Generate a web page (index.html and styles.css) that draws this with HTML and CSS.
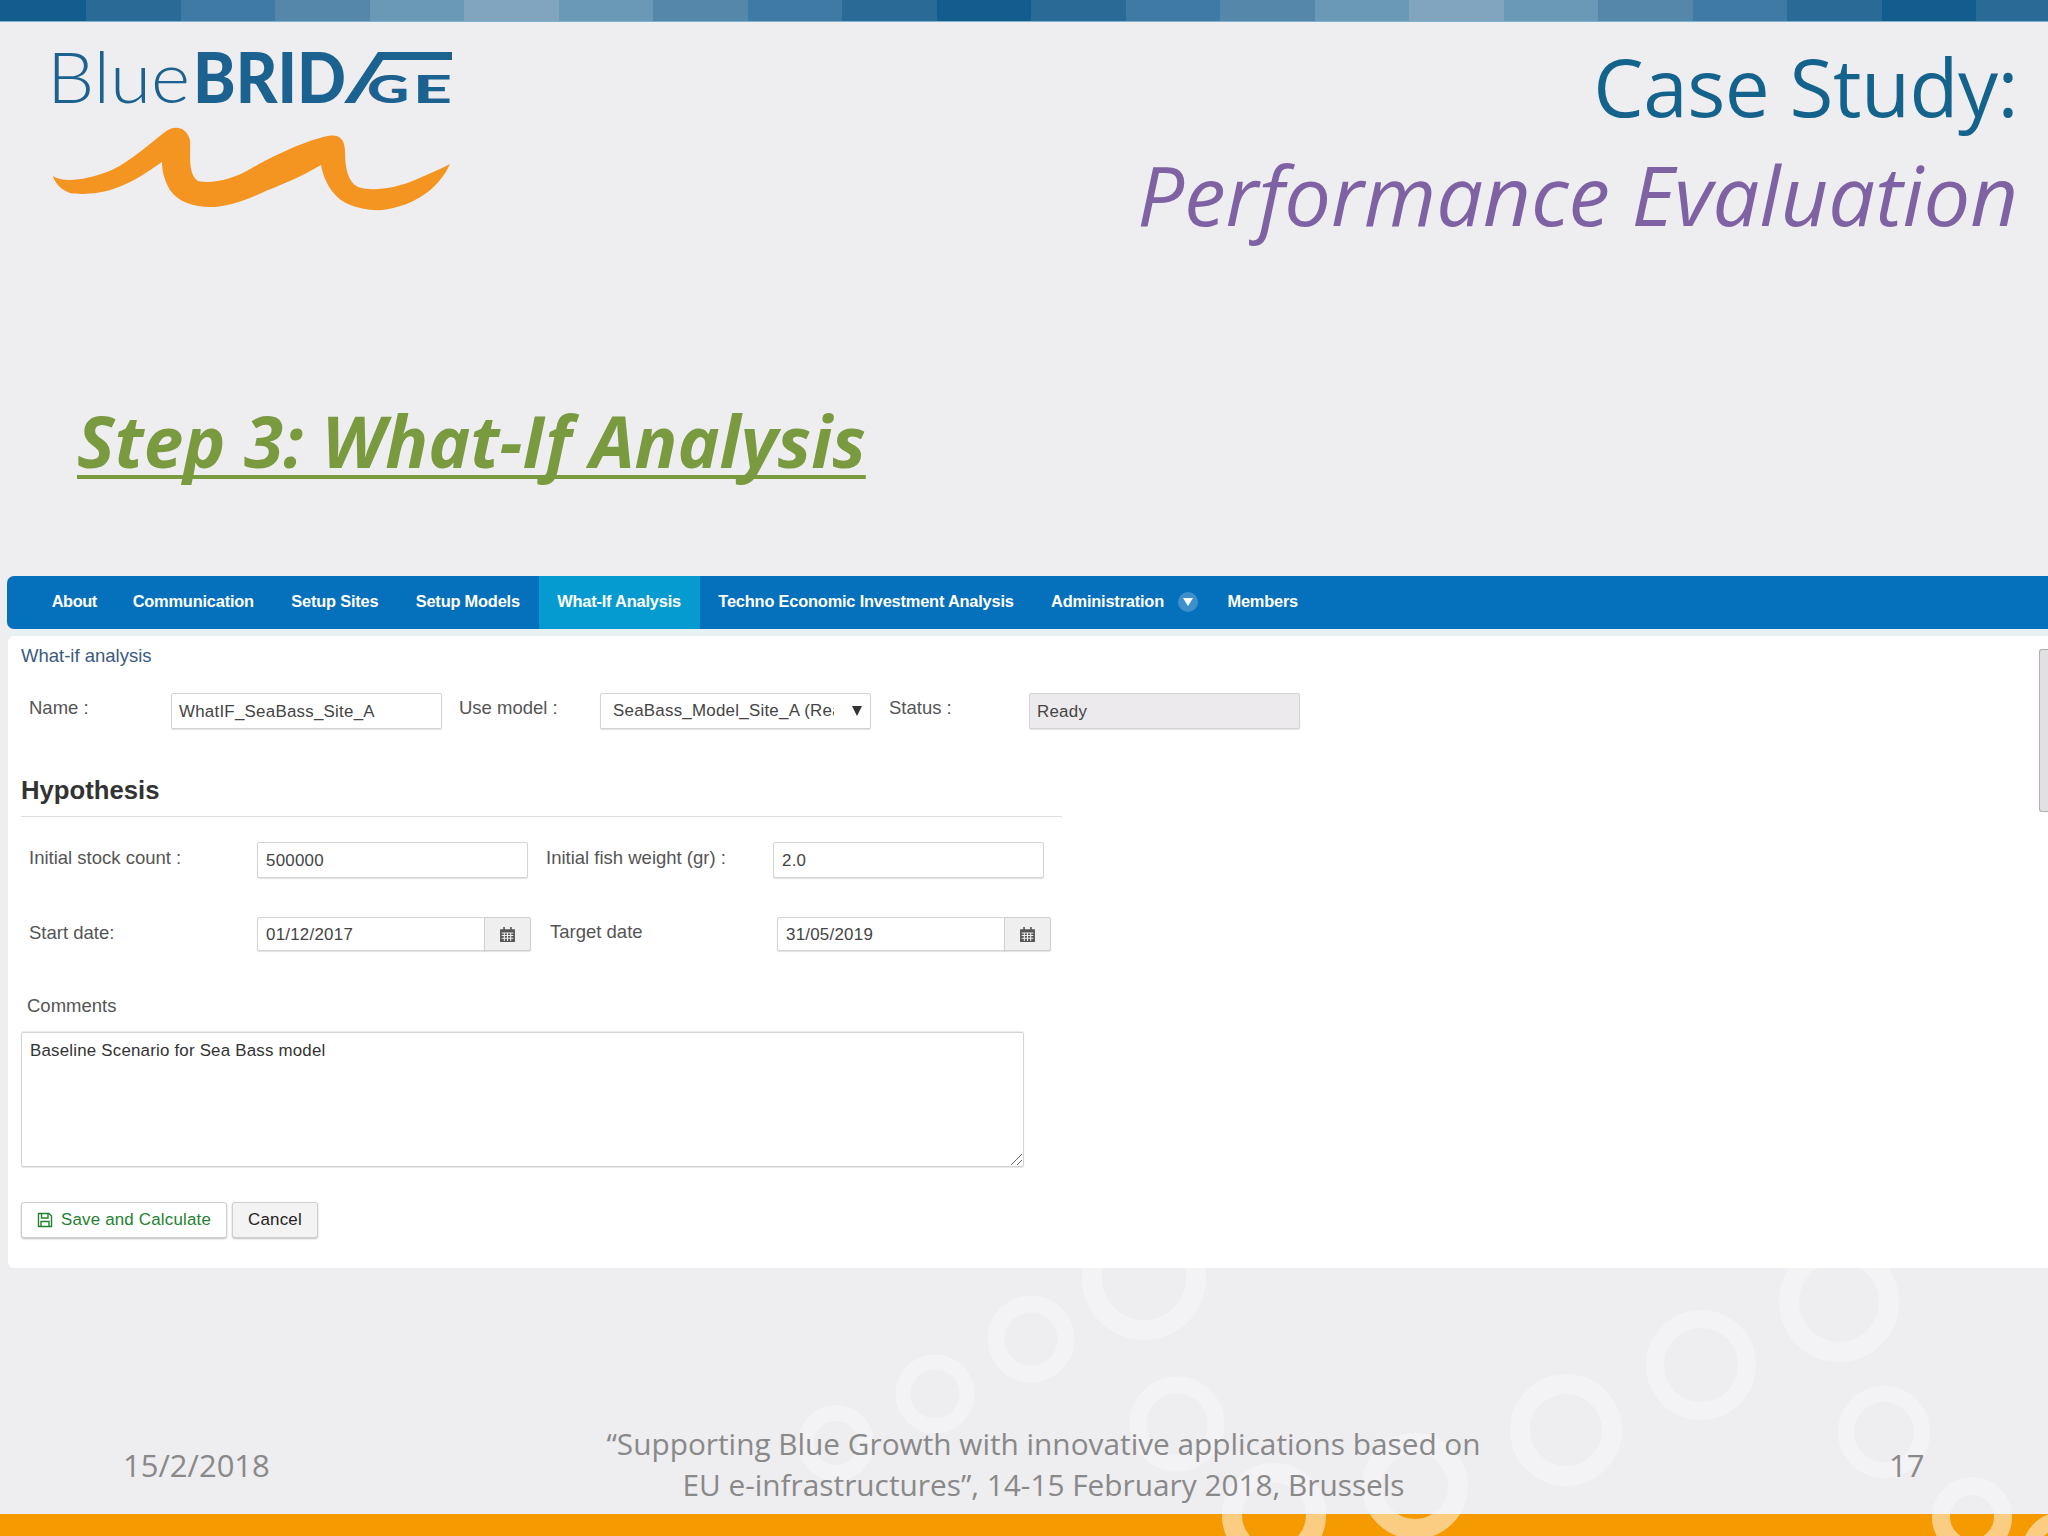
FILE: index.html
```
<!DOCTYPE html>
<html lang="en">
<head>
<meta charset="utf-8">
<title>Case Study: Performance Evaluation</title>
<link rel="stylesheet" href="styles.css">
</head>
<body>
<main class="slide">
  <svg class="rings" viewBox="0 0 2048 1536" aria-hidden="true">
    <circle class="ring" cx="1144" cy="1278" r="52" stroke-width="20"/>
    <circle class="ring" cx="1031" cy="1339" r="35" stroke-width="17"/>
    <circle class="ring" cx="935" cy="1394" r="32" stroke-width="15"/>
    <circle class="ring" cx="1177" cy="1424" r="39" stroke-width="17"/>
    <circle class="ring" cx="836" cy="1443" r="30" stroke-width="16"/>
    <circle class="ring" cx="1274" cy="1515" r="42" stroke-width="20"/>
    <circle class="ring" cx="1415" cy="1486" r="43" stroke-width="20"/>
    <circle class="ring" cx="1566" cy="1430" r="46" stroke-width="20"/>
    <circle class="ring" cx="1701" cy="1365" r="46" stroke-width="18"/>
    <circle class="ring" cx="1839" cy="1302" r="50" stroke-width="20"/>
    <circle class="ring" cx="1884" cy="1432" r="38" stroke-width="16"/>
    <circle class="ring" cx="1972" cy="1517" r="31" stroke-width="18"/>
    <circle class="ring" cx="2062" cy="1552" r="32" stroke-width="16"/>
  </svg>

  <div class="stripes">
    <i class="s1 first"></i><i class="s2"></i><i class="s3"></i><i class="s4"></i><i class="s5"></i><i class="s6"></i><i class="s5"></i><i class="s4"></i><i class="s3"></i><i class="s2"></i><i class="s1"></i><i class="s2"></i><i class="s3"></i><i class="s4"></i><i class="s5"></i><i class="s6"></i><i class="s5"></i><i class="s4"></i><i class="s3"></i><i class="s2"></i><i class="s1"></i><i class="s2"></i>
  </div>

  <header class="head">
    <svg class="logo" viewBox="0 -20 400 178" role="img" aria-label="BlueBRIDGE">
      <text class="logo-thin" x="-5" y="51" textLength="143" lengthAdjust="spacingAndGlyphs">Blue</text>
      <text class="logo-bold" x="141" y="51" textLength="153" lengthAdjust="spacingAndGlyphs">BRID</text>
      <path class="logo-shape" d="M292 51 L326 0 H400 V8 H331 L303 51 Z"/>
      <text class="logo-small" x="315" y="51" textLength="42" lengthAdjust="spacingAndGlyphs">G</text>
      <text class="logo-small" x="361" y="51" textLength="39" lengthAdjust="spacingAndGlyphs">E</text>
      <path class="logo-wave" d="M1 124 C10 130 30 130 60 118 C80 108 100 90 113 80 C122 73 134 74 138 88 C139 100 135 122 146 129 C160 132 180 128 200 116 C225 102 255 88 276 84 C288 82 293 88 293 100 C293 116 296 130 306 135 C320 140 345 136 363 128 C375 123 388 117 398 112 C390 130 372 148 345 155 C330 160 312 159 296 152 C282 146 272 130 269 113 C250 124 232 132 216 138 C195 148 175 155 158 155 C142 155 126 150 118 138 C112 128 110 118 110 110 C95 120 82 130 64 136 C48 142 30 143 18 141 C10 138 3 132 1 124 Z"/>
    </svg>
    <div class="titles">
      <h1 class="title-main">Case Study:</h1>
      <p class="title-sub">Performance Evaluation</p>
    </div>
  </header>

  <h2 class="step">Step 3: What-If Analysis</h2>

  <nav class="nav">
    <a class="tab tab-first">About</a>
    <a class="tab">Communication</a>
    <a class="tab">Setup Sites</a>
    <a class="tab">Setup Models</a>
    <a class="tab active">What-If Analysis</a>
    <a class="tab">Techno Economic Investment Analysis</a>
    <a class="tab tab-menu">Administration<span class="caret"><svg viewBox="0 0 10 8" width="10" height="8" aria-hidden="true"><path d="M0 0 H10 L5 8 Z"/></svg></span></a>
    <a class="tab tab-last">Members</a>
  </nav>
  <div class="nav-gap"></div>

  <section class="panel">
    <span class="scrollbar"></span>
    <div class="crumb">What-if analysis</div>

    <div class="row row-top">
      <label class="lab lab-name">Name :</label>
      <div class="field w-270">WhatIF_SeaBass_Site_A</div>
      <label class="lab lab-model">Use model :</label>
      <div class="field w-270 select"><span class="clip">SeaBass_Model_Site_A (Real)</span><svg class="arrow" viewBox="0 0 10 10" aria-hidden="true"><path d="M0 0 H10 L5 10 Z"/></svg></div>
      <label class="lab lab-status">Status :</label>
      <div class="field w-270 readonly">Ready</div>
    </div>

    <h3 class="hyp">Hypothesis</h3>

    <div class="row row-stock">
      <label class="lab lab-stock">Initial stock count :</label>
      <div class="field w-270">500000</div>
      <label class="lab lab-weight">Initial fish weight (gr) :</label>
      <div class="field w-270">2.0</div>
    </div>

    <div class="row row-date">
      <label class="lab lab-stock">Start date:</label>
      <div class="date">
        <div class="field date-in">01/12/2017</div>
        <span class="addon"><svg class="cal" viewBox="0 0 16 16" aria-hidden="true"><path d="M1 3 H4 V1 H5.5 V3 H10.5 V1 H12 V3 H15 V15 H1 Z"/><path class="cal-lines" d="M2.5 6.5 H13.5 M2.5 9 H13.5 M2.5 11.5 H13.5 M5 6 V14 M8 6 V14 M11 6 V14"/></svg></span>
      </div>
      <label class="lab lab-target">Target date</label>
      <div class="date">
        <div class="field date-in">31/05/2019</div>
        <span class="addon"><svg class="cal" viewBox="0 0 16 16" aria-hidden="true"><path d="M1 3 H4 V1 H5.5 V3 H10.5 V1 H12 V3 H15 V15 H1 Z"/><path class="cal-lines" d="M2.5 6.5 H13.5 M2.5 9 H13.5 M2.5 11.5 H13.5 M5 6 V14 M8 6 V14 M11 6 V14"/></svg></span>
      </div>
    </div>

    <div class="comments-label">Comments</div>
    <div class="textarea">Baseline Scenario for Sea Bass model
      <svg class="grip" viewBox="0 0 12 12" aria-hidden="true"><path d="M1 12 L12 1 M7 12 L12 7"/></svg>
    </div>

    <div class="actions">
      <button class="btn btn-save"><svg class="disk" viewBox="0 0 16 16" aria-hidden="true"><path d="M1.5 1.5 H12 L14.5 4 V14.5 H1.5 Z M4.5 2 V6 H11 V2 M4 14 V9.5 H12 V14"/></svg>Save and Calculate</button>
      <button class="btn btn-cancel">Cancel</button>
    </div>
  </section>

  <footer class="foot">
    <span class="foot-date">15/2/2018</span>
    <p class="foot-note">“Supporting Blue Growth with innovative applications based on<br>EU e-infrastructures”, 14-15 February 2018, Brussels</p>
    <span class="foot-page">17</span>
  </footer>
  <div class="orange">
    <svg class="orange-rings" viewBox="0 1514 2048 22" aria-hidden="true">
      <circle class="ring-hi" cx="1274" cy="1515" r="42" stroke-width="20"/>
      <circle class="ring-hi" cx="1415" cy="1486" r="43" stroke-width="20"/>
      <circle class="ring-hi" cx="1972" cy="1517" r="31" stroke-width="18"/>
      <circle class="ring-hi" cx="2062" cy="1552" r="32" stroke-width="16"/>
    </svg>
  </div>
</main>
</body>
</html>
```
FILE: styles.css
```
* { box-sizing: border-box; }
html, body { margin: 0; padding: 0; }
body { background: #eeedf0; }

.slide {
  position: relative;
  width: 2048px;
  height: 1536px;
  display: flex;
  flex-direction: column;
  overflow: hidden;
  background: #eeedf0;
  font-family: "Liberation Sans", Arial, sans-serif;
}

.rings { position: absolute; inset: 0; width: 2048px; height: 1536px; z-index: 3; pointer-events: none; }
.ring { fill: none; stroke: #fff; stroke-opacity: .3; }

.stripes { display: flex; height: 22px; flex: none; border-bottom: 1px solid #7fb0cc; }
.stripes i { display: block; width: 94.5px; flex: none; }
.stripes i.first { width: 86px; }
.s1 { background: #125d8d; }
.s2 { background: #2a6a96; }
.s3 { background: #3f7aa4; }
.s4 { background: #5487aa; }
.s5 { background: #6a98b7; }
.s6 { background: #82a5bf; }

.head { display: flex; justify-content: space-between; align-items: flex-start; height: 238px; padding: 10px 30px 0 52px; flex: none; }
.logo { width: 400px; height: 178px; flex: none; overflow: visible; }
.logo-thin { font-family: Lato, sans-serif; font-weight: 300; font-size: 70px; fill: #1b6290; }
.logo-bold { font-family: Lato, sans-serif; font-weight: 900; font-size: 70px; fill: #1b6290; }
.logo-small { font-family: Lato, sans-serif; font-weight: 900; font-size: 38px; fill: #1b6290; }
.logo-shape { fill: #1b6290; }
.logo-wave { fill: #f49421; }

.titles { text-align: right; }
.title-main { margin: 0; font-family: "Open Sans", sans-serif; font-weight: 400; font-size: 80px; letter-spacing: -.5px; line-height: 108px; color: #14638c; }
.title-sub { margin: 0; font-family: "Open Sans", sans-serif; font-style: italic; font-size: 83px; line-height: 108px; color: #7f62a3; }

.step {
  margin: 0 0 0 77px;
  height: 316px;
  padding-top: 140px;
  font-family: "Open Sans", sans-serif;
  font-style: italic;
  font-weight: 700;
  font-size: 71px;
  line-height: 82px;
  text-decoration: underline;
  text-decoration-thickness: 4px;
  text-decoration-skip-ink: none;
  text-underline-offset: 7px;
  color: #7a9a3f;
  flex: none;
}

.nav {
  display: flex;
  align-items: stretch;
  height: 53px;
  margin-left: 7px;
  padding-left: 26px;
  background: #0570bc;
  border-radius: 7px 0 0 7px;
  flex: none;
}
.tab {
  display: flex;
  align-items: center;
  padding: 0 18.7px 2px;
  color: #fff;
  font-weight: 700;
  font-size: 16.4px;
  letter-spacing: -.2px;
}
.tab.active { background: #069bd0; }
.tab-first { letter-spacing: -.45px; padding-right: 17.2px; }
.tab-menu { padding-right: 12px; }
.tab-last { padding-left: 17px; }
.caret {
  display: flex;
  align-items: center;
  justify-content: center;
  width: 20px;
  height: 20px;
  margin-left: 14.5px;
  border-radius: 50%;
  background: #3f8fcc;
}
.caret svg { fill: #fff; }

.nav-gap { height: 7px; background: #e9f0f4; margin-left: 7px; flex: none; }

.panel {
  position: relative;
  z-index: 4;
  height: 632px;
  margin-left: 8px;
  padding: 0 13px;
  background: #fff;
  border-radius: 6px 0 0 6px;
  color: #555;
  font-size: 18.5px;
  flex: none;
}
.scrollbar {
  position: absolute;
  right: 0;
  top: 13px;
  width: 9px;
  height: 163px;
  background: #e2e0e2;
  border: 1px solid #b0afb0;
  border-right: 0;
  border-radius: 3px 0 0 3px;
}
.crumb { height: 40px; padding-top: 9px; line-height: 22px; color: #3b5a80; }

.row { display: flex; align-items: flex-start; }
.row-top { padding-top: 17px; height: 100px; }
.row-stock { padding-top: 25px; height: 76px; }
.row-date { height: 100px; padding-top: 24px; }

.lab { display: block; color: #555; line-height: 26px; flex: none; padding-left: 8px; white-space: nowrap; }
.lab-name { width: 150px; margin-top: 2px; }
.lab-model { width: 158px; margin-top: 2px; padding-left: 17px; }
.lab-status { width: 158px; margin-top: 2px; padding-left: 18px; }
.lab-stock { width: 236px; margin-top: 3px; }
.lab-weight { width: 245px; padding-left: 18px; margin-top: 3px; }
.lab-target { width: 246px; padding-left: 19px; margin-top: 2px; }

.field {
  height: 36px;
  padding: 0 7px;
  background: #fff;
  border: 1px solid #d4d4d4;
  border-radius: 2px;
  box-shadow: 0 1px 1px rgba(0,0,0,.12);
  color: #444;
  font-size: 16.9px;
  line-height: 36px;
  letter-spacing: .25px;
  white-space: nowrap;
  flex: none;
}
.row-stock .field { padding-left: 8px; }
.w-270 { width: 271px; }
.select { display: flex; justify-content: space-between; align-items: center; padding-left: 12px; padding-right: 8px; }
.clip { display: block; width: 221px; overflow: hidden; }
.arrow { width: 10px; height: 10px; fill: #333; flex: none; }
.readonly { background: #eceaec; }

.date { display: flex; flex: none; width: 274px; }
.date-in { width: 228px; height: 34px; padding-left: 8px; line-height: 34px; border-radius: 2px 0 0 2px; }
.addon {
  display: flex;
  align-items: center;
  justify-content: center;
  width: 47px;
  height: 34px;
  margin-left: -1px;
  background: #f0eff0;
  border: 1px solid #cfcfcf;
  border-radius: 0 2px 2px 0;
  box-shadow: 0 1px 1px rgba(0,0,0,.12);
}
.cal { width: 17px; height: 17px; fill: #555; }
.cal-lines { fill: none; stroke: #f0eff0; stroke-width: 1; }

.hyp {
  margin: 0;
  width: 1041px;
  height: 41px;
  border-bottom: 1px solid #dedede;
  color: #333;
  font-size: 25.7px;
  font-weight: 700;
  line-height: 28px;
}

.comments-label { height: 39px; padding: 2px 0 0 6px; line-height: 22px; color: #555; }
.textarea {
  position: relative;
  width: 1003px;
  height: 135px;
  padding: 8px 8px;
  border: 1px solid #d4d4d4;
  border-radius: 2px;
  box-shadow: 0 -1px 1px rgba(0,0,0,.08), 0 1px 1px rgba(0,0,0,.1);
  color: #333;
  font-size: 16.9px;
  line-height: 20px;
  letter-spacing: .2px;
}
.grip { position: absolute; right: 1px; bottom: 1px; width: 12px; height: 12px; fill: none; stroke: #666; stroke-width: 1; }

.actions { display: flex; gap: 5px; padding-top: 35px; }
.btn {
  display: flex;
  align-items: center;
  justify-content: center;
  height: 36px;
  padding: 0;
  border: 1px solid #cfcfcf;
  border-radius: 3px;
  box-shadow: 0 1px 2px rgba(0,0,0,.25);
  font-family: inherit;
  font-size: 16.9px;
  letter-spacing: .2px;
}
.btn-save { width: 206px; background: #fff; color: #22822f; }
.btn-cancel { width: 86px; background: #f4f3f4; color: #222; }
.disk { width: 16px; height: 16px; margin-right: 8px; fill: none; stroke: #22822f; stroke-width: 1.4; }

.foot {
  display: flex;
  flex: 1;
  position: relative;
  z-index: 4;
  color: #898989;
  font-family: "Open Sans", sans-serif;
  font-size: 31px;
}
.foot-date { position: absolute; left: 123px; bottom: 29px; line-height: 40px; }
.foot-page { position: absolute; left: 1889px; bottom: 29px; line-height: 40px; }
.foot-note { margin: 155px 0 0 566px; width: 955px; text-align: center; font-size: 29.8px; line-height: 41px; }

.orange { height: 22px; background: #f59a00; flex: none; }
.orange-rings { display: block; width: 2048px; height: 22px; }
.ring-hi { fill: none; stroke: #fff; stroke-opacity: .3; }
```
